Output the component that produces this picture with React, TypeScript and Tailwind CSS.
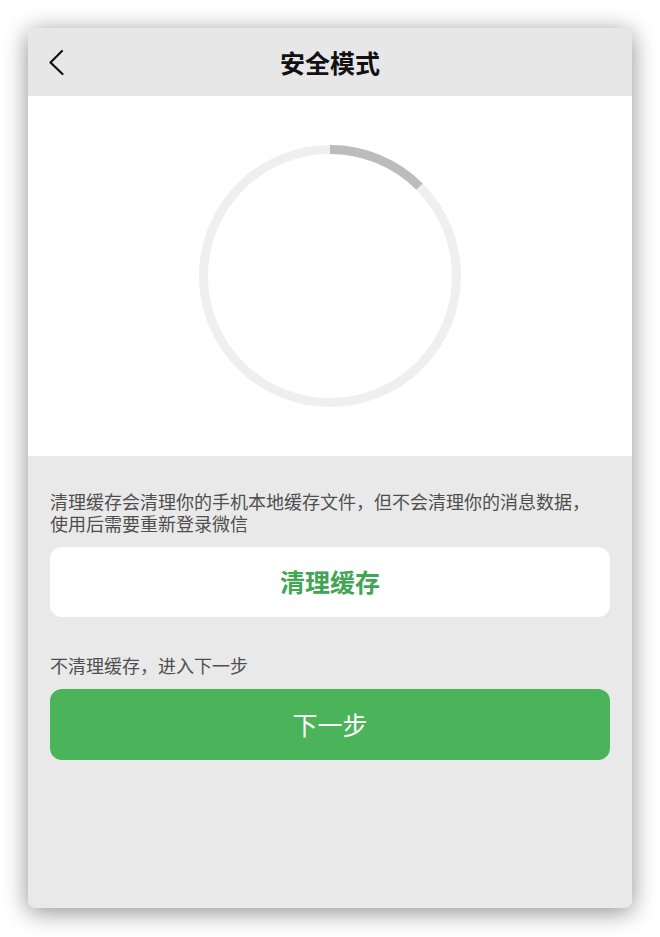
import React from "react";

function Ring() {
  const size = 262;
  const stroke = 9;
  const r = (size - stroke) / 2;
  const c = 2 * Math.PI * r;
  return (
    <svg width={size} height={size} viewBox={`0 0 ${size} ${size}`}>
      <circle cx={size / 2} cy={size / 2} r={r} fill="none" stroke="#efefef" strokeWidth={stroke} />
      <circle
        cx={size / 2}
        cy={size / 2}
        r={r}
        fill="none"
        stroke="#bcbcbc"
        strokeWidth={stroke}
        strokeDasharray={`${c / 8} ${c}`}
        transform={`rotate(-90 ${size / 2} ${size / 2})`}
      />
    </svg>
  );
}

export default function App() {
  return (
    <div
      className="w-[660px] h-[937px] bg-white pt-[28px] pl-[28px]"
      style={{ fontFamily: '"Noto Sans CJK SC", "Noto Sans", sans-serif' }}
    >
      <div className="w-[604px] h-[880px] rounded-[7px] bg-[#e9e9e9] overflow-hidden shadow-[0_4px_24px_rgba(0,0,0,0.45)] flex flex-col">
        <div className="h-[68px] bg-[#e7e7e7] grid grid-cols-[1fr_auto_1fr] items-center px-[20px]">
          <svg width="16" height="28" viewBox="0 0 16 28" className="ml-[1px]">
            <path d="M13 3 L1.5 14.5 L13.5 26" fill="none" stroke="#111" strokeWidth="2.2" strokeLinecap="round" strokeLinejoin="round" />
          </svg>
          <div className="text-[25px] font-bold text-[#111] leading-none">安全模式</div>
          <div />
        </div>
        <div className="h-[360px] bg-white flex items-center justify-center">
          <Ring />
        </div>
        <div className="px-[22px] pt-[34px] flex flex-col">
          <p className="text-[18px] leading-[22px] text-[#4f4f4f] whitespace-nowrap">
            清理缓存会清理你的手机本地缓存文件，但不会清理你的消息数据，
            <br />
            使用后需要重新登录微信
          </p>
          <button className="mt-[13px] h-[70px] rounded-[12px] bg-white text-[25px] font-semibold text-[#42a553] flex items-center justify-center">
            清理缓存
          </button>
          <p className="mt-[37px] text-[18px] leading-[22px] text-[#4f4f4f]">不清理缓存，进入下一步</p>
          <button className="mt-[13px] h-[71px] rounded-[12px] bg-[#4bb35a] text-[25px] text-white flex items-center justify-center">
            下一步
          </button>
        </div>
      </div>
    </div>
  );
}
